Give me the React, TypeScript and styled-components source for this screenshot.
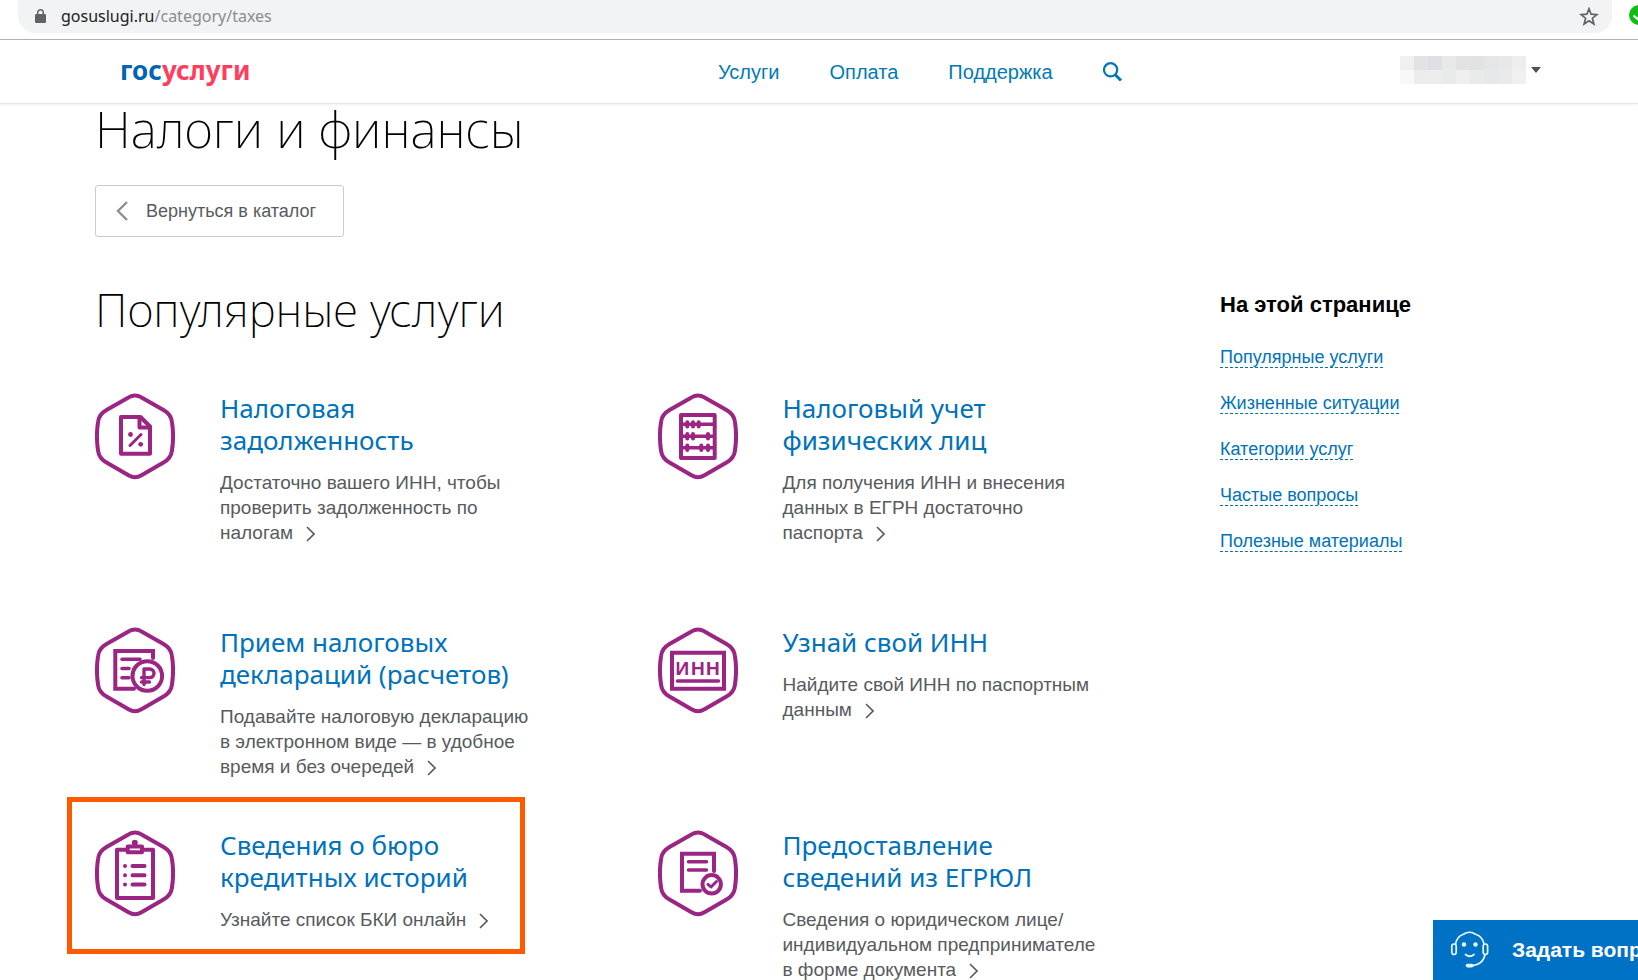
import React from "react";
import styled, { createGlobalStyle } from "styled-components";

const heading = '"Noto Sans", "Open Sans", sans-serif';
const body = '"Liberation Sans", Arial, sans-serif';
const purple = "#9b2583";
const blue = "#0072bc";

const GlobalStyle = createGlobalStyle`
  * { box-sizing: border-box; }
  body { margin: 0; background: #fff; color: #000; font-family: ${body}; overflow-x: hidden; }
  h1, h2, h3, p, ul { margin: 0; padding: 0; }
  ul { list-style: none; }
  a { text-decoration: none; }
  svg { display: block; flex: none; }
`;

const BrowserBar = styled.div`
  display: flex;
  align-items: flex-start;
  height: 40px;
  padding-left: 18px;
  border-bottom: 1px solid #b1b4b6;
  overflow: hidden;
`;

const AddressBar = styled.div`
  display: flex;
  flex: 1;
  align-items: center;
  gap: 15px;
  height: 33px;
  padding: 0 13px 0 17px;
  border-radius: 0 0 17px 17px;
  background: #f1f3f4;
`;

const Address = styled.p`
  flex: 1;
  padding-bottom: 2px;
  color: #8a8d91;
  font: 400 16px/30px ${heading};
`;

const Host = styled.span`
  color: #202124;
`;

const PlainButton = styled.button`
  display: block;
  padding: 0;
  border: 0;
  background: none;
  cursor: pointer;
`;

const Extension = styled.div`
  flex: 0 0 26px;
  padding: 5px 0 0 17px;
  overflow: hidden;
`;

const Header = styled.header`
  display: grid;
  grid-template-columns: 598px auto 1fr;
  align-items: center;
  height: 64px;
  padding: 0 97px 0 120px;
  border-bottom: 1px solid #e4e4e4;
  box-shadow: 0 1px 2px rgba(0, 0, 0, 0.06);
`;

const Logo = styled.a`
  justify-self: start;
  padding-bottom: 4px;
  color: #ff3d5e;
  font: 700 26px/34px ${heading};
`;

const LogoStart = styled.span`
  color: #0065b1;
`;

const Nav = styled.nav`
  display: flex;
  align-items: center;
  gap: 50px;
`;

const NavLink = styled.a`
  color: #007bb5;
  font-size: 20px;
  line-height: 28px;
`;

const AccountButton = styled(PlainButton)`
  display: flex;
  justify-self: end;
  align-items: center;
  gap: 5px;
  padding-bottom: 3px;
`;

const Page = styled.main`
  display: grid;
  grid-template-columns: 1fr 418px;
  padding-left: 95px;
`;

const Intro = styled.div`
  grid-column: 1 / -1;
`;

const PageTitle = styled.h1`
  font: 200 50px/50px ${heading};
`;

const BackButton = styled.button`
  display: flex;
  align-items: center;
  gap: 18px;
  height: 52px;
  margin: 31px 0 47px;
  padding: 0 27px 0 20px;
  border: 1px solid #c9cccf;
  border-radius: 3px;
  background: #fff;
  color: #575b5e;
  font: 18px/24px ${body};
  cursor: pointer;
`;

const SectionTitle = styled.h2`
  margin-bottom: 58px;
  font: 200 46px/50px ${heading};
`;

const ServiceRow = styled.div<{ $gap: number }>`
  display: grid;
  grid-template-columns: 1fr 1fr;
  margin-bottom: ${(p) => p.$gap}px;
`;

const Card = styled.a`
  position: relative;
  display: flex;
  align-items: flex-start;
  gap: 45px;
  color: #575b5e;
`;

const Highlight = styled.span`
  position: absolute;
  top: -32px;
  left: -28px;
  width: 458px;
  height: 157px;
  border: 5px solid #ff5a00;
  pointer-events: none;
`;

const Badge = styled.svg`
  width: 80px;
  height: 88px;
  padding-top: 1px;
  fill: none;
  stroke: ${purple};
  stroke-width: 4;
  stroke-linecap: round;
  stroke-linejoin: round;
`;

const BadgeText = styled.text`
  fill: ${purple};
  stroke: none;
  font-family: ${body};
  font-weight: 700;
  font-size: 19px;
`;

const CardText = styled.div`
  flex: 1;
  max-width: 318px;
`;

const CardTitle = styled.h3`
  margin-bottom: 14px;
  color: ${blue};
  font: 400 26px/32px ${heading};
`;

const CardNote = styled.p`
  font-size: 19px;
  line-height: 25px;
`;

const NoteArrow = styled.svg`
  display: inline-block;
  margin-left: 13px;
  vertical-align: -3px;
`;

const Sidebar = styled.aside`
  padding-top: 7px;
`;

const SidebarTitle = styled.h3`
  margin-bottom: 26px;
  font: 700 22px/28px ${body};
`;

const SidebarList = styled.ul`
  display: grid;
  gap: 22px;
`;

const SidebarItem = styled.li`
  font-size: 18px;
  line-height: 24px;
`;

const SidebarLink = styled.a`
  border-bottom: 1px dashed #0073a8;
  color: #0073b8;
`;

const ChatButton = styled.button`
  position: fixed;
  right: 0;
  bottom: 0;
  display: flex;
  align-items: center;
  justify-content: flex-start;
  gap: 22px;
  width: 205px;
  height: 60px;
  padding: 0 0 0 17px;
  border: 0;
  background: #0072c6;
  color: #fff;
  font: 700 21px/28px ${body};
  white-space: nowrap;
  overflow: hidden;
  cursor: pointer;
`;

const MOSAIC = [
  ["#f0f0f1", "#e2e3e5", "#dfe0e3", "#e8e9eb", "#e2e3e5", "#e1e2e4", "#e5e6e7", "#e8e8e9", "#eeeeef"],
  ["#f8f8f8", "#ebecec", "#ededed", "#e9eaea", "#efefef", "#e9ebea", "#e7e9e8", "#e8eaec", "#f0f0f1"],
];

const Hexagon = () => (
  <path d="M33.5 4.4C37.8 1.8 42.2 1.8 46.5 4.4L68.5 17C74 20.2 76.2 23 76.9 28.5C78.4 38 78.4 48.5 76.9 58C76.2 63.5 74 66.4 68.5 69.6L46.5 82.3C42.2 84.9 37.8 84.9 33.5 82.3L11.5 69.6C6 66.4 3.8 63.5 3.1 58C1.6 48.5 1.6 38 3.1 28.5C3.8 23 6 20.2 11.5 17Z" />
);

const glyphs: Record<string, React.ReactNode> = {
  percent: (
    <>
      <path d="M26 24H45.5L55 33.5V60.7H26Z" />
      <path d="M44.5 24V34.5H55" />
      <path d="M35 52.5L46 41.5" strokeWidth="3" />
      <circle cx="35.5" cy="41.5" r="2.4" fill={purple} stroke="none" />
      <circle cx="45.7" cy="51.3" r="2.4" fill={purple} stroke="none" />
    </>
  ),
  abacus: (
    <>
      <path d="M23 22H56.7V65H23Z" />
      <path d="M23 31.3H56M23 43.3H56M23 54.7H56" strokeWidth="3.4" />
      <path d="M29.3 29.2v4.4M35 29.2v4.4M40.7 29.2v4.4M29.3 41v4.4M35 41v4.4M50 41v4.4M29.3 52.5v4.4M43.3 52.5v4.4M50 52.5v4.4" />
    </>
  ),
  rouble: (
    <>
      <path d="M58 31V24H20.3V61.7H39" strokeLinejoin="miter" />
      <path d="M27 32.3H45M27 41.5H34M27 50.7H34" strokeWidth="3.6" />
      <circle cx="52.3" cy="49" r="14.8" />
      <path d="M49 57.5V42H54.5C60.5 42 60.5 50.6 54.5 50.6H46.5M46.5 55H54.5" strokeWidth="3.4" />
    </>
  ),
  inn: (
    <>
      <path d="M14 25.7H66V61.7H14Z" strokeLinejoin="miter" />
      <path d="M19.5 54H60.5" strokeWidth="3.4" />
      <BadgeText x="17.5 33 48" y="47.5">ИНН</BadgeText>
    </>
  ),
  clipboard: (
    <>
      <path d="M32 19.7H22V68H58V19.7H47" />
      <path d="M32.7 16.5H47V22.3H32.7Z" />
      <circle cx="39.8" cy="12.8" r="3" fill={purple} stroke="none" />
      <path d="M30 36h.01M30 45.3h.01M30 54.5h.01M37.5 36H49.5M37.5 45.3H49.5M37.5 54.5H49.5" />
    </>
  ),
  certificate: (
    <>
      <path d="M56 41V23.7H24V60.7H42" strokeLinejoin="miter" />
      <path d="M30.5 31.7H48.5M30.5 40H48.5" strokeWidth="3.6" />
      <circle cx="53.7" cy="54.3" r="9.2" />
      <path d="M50 54.3L53 57L58.5 51.5" strokeWidth="3" />
    </>
  ),
};

type Service = { icon: string; title: string; note: string; marked?: boolean };

const rows: { gap: number; services: Service[] }[] = [
  {
    gap: 81,
    services: [
      { icon: "percent", title: "Налоговая задолженность", note: "Достаточно вашего ИНН, чтобы проверить задолженность по налогам" },
      { icon: "abacus", title: "Налоговый учет физических лиц", note: "Для получения ИНН и внесения данных в ЕГРН достаточно паспорта" },
    ],
  },
  {
    gap: 50,
    services: [
      { icon: "rouble", title: "Прием налоговых деклараций (расчетов)", note: "Подавайте налоговую декларацию в электронном виде — в удобное время и без очередей" },
      { icon: "inn", title: "Узнай свой ИНН", note: "Найдите свой ИНН по паспортным данным" },
    ],
  },
  {
    gap: 0,
    services: [
      { icon: "clipboard", title: "Сведения о бюро кредитных историй", note: "Узнайте список БКИ онлайн", marked: true },
      { icon: "certificate", title: "Предоставление сведений из ЕГРЮЛ", note: "Сведения о юридическом лице/\u200bиндивидуальном предпринимателе в форме документа" },
    ],
  },
];

const sections = ["Популярные услуги", "Жизненные ситуации", "Категории услуг", "Частые вопросы", "Полезные материалы"];

const ServiceCard = ({ icon, title, note, marked }: Service) => (
  <Card href="#service">
    <Badge viewBox="0 0 80 87" aria-hidden="true">
      <Hexagon />
      {glyphs[icon]}
    </Badge>
    <CardText>
      <CardTitle>{title}</CardTitle>
      <CardNote>
        {note}
        <NoteArrow width="9" height="16" viewBox="0 0 9 16" fill="none" stroke="#575b5e" strokeWidth="1.6" aria-hidden="true">
          <path d="M1 1L8 8L1 15" />
        </NoteArrow>
      </CardNote>
    </CardText>
    {marked && <Highlight />}
  </Card>
);

export default function App() {
  return (
    <>
      <GlobalStyle />
      <BrowserBar>
        <AddressBar>
          <svg width="11" height="15" viewBox="0 0 11 15" aria-hidden="true">
            <rect x="0" y="5" width="11" height="9" rx="1.2" fill="#5f6368" />
            <path d="M2.7 6V3.6a2.8 2.8 0 0 1 5.6 0V6" fill="none" stroke="#5f6368" strokeWidth="1.5" />
          </svg>
          <Address>
            <Host>gosuslugi.ru</Host>/category/taxes
          </Address>
          <PlainButton aria-label="Добавить в закладки">
            <svg width="20" height="20" viewBox="0 0 20 20" fill="none" stroke="#5f6368" strokeWidth="1.7">
              <path d="M10 1.8L12.1 7.2L17.9 7.6L13.4 11.2L14.9 17L10 13.8L5.1 17L6.6 11.2L2.1 7.6L7.9 7.2Z" />
            </svg>
          </PlainButton>
        </AddressBar>
        <Extension>
          <svg width="20" height="20" viewBox="0 0 20 20" aria-hidden="true">
            <circle cx="10" cy="10" r="10" fill="#0dbf12" />
            <path d="M4.5 10.5L8.5 14L15 6.5" fill="none" stroke="#fff" strokeWidth="2" />
          </svg>
        </Extension>
      </BrowserBar>

      <Header>
        <Logo href="#home">
          <LogoStart>гос</LogoStart>услуги
        </Logo>
        <Nav>
          <NavLink href="#services">Услуги</NavLink>
          <NavLink href="#payment">Оплата</NavLink>
          <NavLink href="#support">Поддержка</NavLink>
          <PlainButton aria-label="Поиск">
            <svg width="20" height="20" viewBox="0 0 20 20" fill="none" stroke="#0078b4">
              <circle cx="7.6" cy="7.8" r="6.6" strokeWidth="2.2" />
              <path d="M12 12.5L18 18.5" strokeWidth="3" />
            </svg>
          </PlainButton>
        </Nav>
        <AccountButton aria-label="Личный кабинет">
          <svg width="126" height="28" viewBox="0 0 126 28" shapeRendering="crispEdges" aria-hidden="true">
            {MOSAIC.map((line, y) =>
              line.map((fill, x) => <rect key={`${x}-${y}`} x={x * 14} y={y * 14} width="14" height="14" fill={fill} />)
            )}
          </svg>
          <svg width="10" height="6" viewBox="0 0 10 6" aria-hidden="true">
            <path d="M0 0H10L5 6Z" fill="#4f5255" />
          </svg>
        </AccountButton>
      </Header>

      <Page>
        <Intro>
          <PageTitle>Налоги и финансы</PageTitle>
          <BackButton>
            <svg width="12" height="20" viewBox="0 0 12 20" fill="none" stroke="#8d9092" strokeWidth="2.4" aria-hidden="true">
              <path d="M11 1L2 10L11 19" />
            </svg>
            Вернуться в каталог
          </BackButton>
        </Intro>
        <section>
          <SectionTitle>Популярные услуги</SectionTitle>
          {rows.map((row) => (
            <ServiceRow key={row.services[0].icon} $gap={row.gap}>
              {row.services.map((service) => (
                <ServiceCard key={service.icon} {...service} />
              ))}
            </ServiceRow>
          ))}
        </section>
        <Sidebar>
          <SidebarTitle>На этой странице</SidebarTitle>
          <SidebarList>
            {sections.map((name) => (
              <SidebarItem key={name}>
                <SidebarLink href="#section">{name}</SidebarLink>
              </SidebarItem>
            ))}
          </SidebarList>
        </Sidebar>
      </Page>

      <ChatButton>
        <svg width="40" height="40" viewBox="0 0 40 40" fill="none" stroke="#e6fbff" strokeWidth="1.7" strokeLinecap="round" aria-hidden="true">
          <path d="M5.5 14C6.5 8.5 9.5 5.5 13.5 4.2C17 1.6 22 1.6 25.5 4.2C30 5.5 33 9 34 14" />
          <rect x="1.8" y="14" width="4.4" height="10.5" rx="2.2" />
          <rect x="33.2" y="14" width="4.4" height="10.5" rx="2.2" />
          <path d="M35 25C33.5 31 29.5 35 22.5 35.6" />
          <path d="M17.5 35.6H22" strokeWidth="3.6" />
          <circle cx="14" cy="14.5" r="2.2" fill="#e6fbff" stroke="none" />
          <circle cx="25.5" cy="14.5" r="2.2" fill="#e6fbff" stroke="none" />
          <path d="M15.5 24.5Q19.8 28 24 24.5" />
        </svg>
        Задать вопрос
      </ChatButton>
    </>
  );
}
